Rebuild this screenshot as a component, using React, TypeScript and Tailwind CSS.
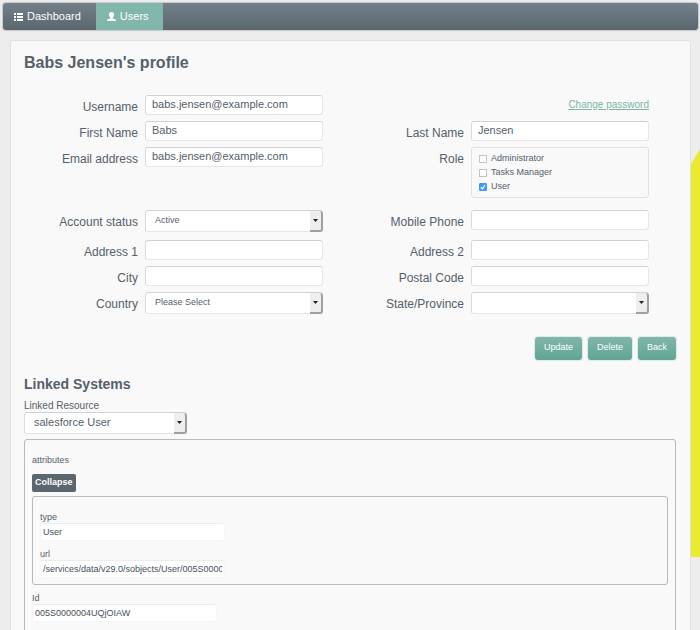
import React, { useId, useState } from 'react';
import { clsx } from 'clsx';

const fieldClass =
  'block w-full rounded-[3px] border border-[#e6e6e6] border-t-[#d2d2d2] border-l-[#dadada] bg-white text-[#55606a] outline-none';

const ListIcon = () => (
  <svg className="h-2 w-[9px]" viewBox="0 0 18 16" fill="currentColor" aria-hidden="true">
    <path d="M0 0h4v4H0zM0 6h4v4H0zM0 12h4v4H0zM6 0h12v4H6zM6 6h12v4H6zM6 12h12v4H6z" />
  </svg>
);

const UserIcon = () => (
  <svg className="h-[9px] w-[9px]" viewBox="0 0 18 18" fill="currentColor" aria-hidden="true">
    <path d="M9 0c3.500 0 5.200 2.400 5 5.400-.2 2.600-1.200 4.400-2.600 5.600v1.200c0 .7.5 1 1.300 1.300l3.400 1.100c1.200.4 1.900 1.200 1.900 3.400H0c0-2.200.7-3 1.900-3.400l3.400-1.100c.8-.3 1.300-.6 1.300-1.300V11C5.200 9.800 4.200 8 4 5.400 3.800 2.400 5.500 0 9 0z" />
  </svg>
);

interface FieldProps {
  label: string;
  children: (id: string) => React.ReactNode;
}

const Field: React.FC<FieldProps> = ({ label, children }) => {
  const id = useId();
  return (
    <div className="grid grid-cols-[114px_1fr] items-start gap-[7px] pr-[27px]">
      <label htmlFor={id} className="pt-1 text-right text-xs">
        {label}
      </label>
      {children(id)}
    </div>
  );
};

const TextField = ({ label, value = '', type = 'text' }: { label: string; value?: string; type?: string }) => (
  <Field label={label}>
    {(id) => <input id={id} type={type} defaultValue={value} className={clsx(fieldClass, 'h-5 px-[6px] pb-[2px] text-[11px]')} />}
  </Field>
);

interface SelectProps {
  id: string;
  options: string[];
  large?: boolean;
}

const Select: React.FC<SelectProps> = ({ id, options, large = false }) => (
  <div className="relative">
    <select
      id={id}
      className={clsx(fieldClass, 'h-[22px] appearance-none pr-4 pl-[9px]', large ? 'pb-[2px] text-[11px]' : 'text-[9px]')}
    >
      {options.map((option) => (
        <option key={option}>{option}</option>
      ))}
    </select>
    <span className="pointer-events-none absolute top-px right-0 bottom-0 flex w-[13px] items-center justify-center rounded-r-[3px] border-r-2 border-b-2 border-[#a0a0a0] bg-[#eeeeee]">
      <svg className="h-[3px] w-[5px]" viewBox="0 0 10 6" fill="#222">
        <path d="M0 0h10L5 6z" />
      </svg>
    </span>
  </div>
);

const SelectField = ({ label, options }: { label: string; options: string[] }) => (
  <Field label={label}>{(id) => <Select id={id} options={options} />}</Field>
);

const RoleField = () => {
  const [roles, setRoles] = useState<Record<string, boolean>>({
    Administrator: false,
    'Tasks Manager': false,
    User: true
  });

  return (
    <div role="group" aria-labelledby="role-label" className="grid grid-cols-[114px_1fr] items-start gap-[7px] pr-[27px]">
      <span id="role-label" className="pt-1 text-right text-xs">
        Role
      </span>
      <div className="rounded-[3px] border border-[#e2e2e2] px-[7px] pt-1 pb-[3px]">
        {Object.entries(roles).map(([role, checked]) => (
          <label key={role} className="flex h-[14px] items-center gap-1 text-[9px]">
            <span className="relative flex">
              <input
                type="checkbox"
                checked={checked}
                onChange={() => setRoles({ ...roles, [role]: !checked })}
                className="h-2 w-2 appearance-none border border-[#c4c4c4] bg-white checked:rounded-[1px] checked:border-[#3b99fc] checked:bg-[#3b99fc]"
              />
              {checked && (
                <svg className="pointer-events-none absolute inset-0 h-2 w-2" viewBox="0 0 16 16" fill="none" stroke="white" strokeWidth="2.500">
                  <path d="M4 8.500l3 3.500 5-8" />
                </svg>
              )}
            </span>
            {role}
          </label>
        ))}
      </div>
    </div>
  );
};

const PlainField = ({ label, value }: { label: string; value: string }) => {
  const id = useId();
  return (
    <div className="w-[185px] text-[9px]">
      <label htmlFor={id} className="block leading-3">
        {label}
      </label>
      <input
        id={id}
        type="text"
        defaultValue={value}
        className="block h-[18px] w-full rounded-[3px] border border-[#f6f6f6] border-t-[#ececec] bg-white px-[2px] text-[#45505a] outline-none"
      />
    </div>
  );
};

export default function App() {
  const [open, setOpen] = useState(true);

  return (
    <div className="relative flex min-h-screen flex-col overflow-hidden bg-[#ededed] pt-[3px] font-['Liberation_Sans',Arial,sans-serif] text-[#55606a]">
      {/* Background accent */}
      <svg className="absolute top-[149px] right-0 h-[408px] w-[10px]" viewBox="0 0 10 408" fill="#eaea30" aria-hidden="true">
        <path d="M10 0v408H0V17z" />
      </svg>

      <nav className="mr-[2px] ml-[3px] flex h-[27px] overflow-hidden rounded-[3px] bg-linear-to-b from-[#73808a] to-[#5b666e] text-[11px] text-white shadow-[0_0_1px_1px_#c8c8c8]">
        <a href="#dashboard" className="flex items-center gap-1 pr-[15px] pl-[11px]">
          <ListIcon />
          Dashboard
        </a>
        <a href="#users" className="flex items-center gap-1 bg-[#80b7aa] pr-[14px] pl-[11px]">
          <UserIcon />
          Users
        </a>
      </nav>

      <main className="relative mt-[10px] mr-[9px] ml-[10px] flex-1 rounded-t-[3px] border border-b-0 border-[#e0e0e0] bg-[#f9f9f9] pt-3 pr-[14px] pl-[13px]">
        <h1 className="text-base leading-5 font-bold">Babs Jensen's profile</h1>

        <form className="mt-[22px]" onSubmit={(e) => e.preventDefault()}>
          <div className="grid grid-cols-2 gap-y-[6px]">
            <TextField label="Username" value="babs.jensen@example.com" />
            <div className="pt-[2px] pr-[27px] text-right text-[10px]">
              <a href="#password" className="text-[#7db5a7] underline">
                Change password
              </a>
            </div>
            <TextField label="First Name" value="Babs" />
            <TextField label="Last Name" value="Jensen" />
            <TextField label="Email address" value="babs.jensen@example.com" type="email" />
            <RoleField />
          </div>

          <div className="mt-3 grid grid-cols-2 gap-y-[6px]">
            <SelectField label="Account status" options={['Active', 'Inactive']} />
            <TextField label="Mobile Phone" type="tel" />
          </div>

          <div className="mt-2 grid grid-cols-2 gap-y-[6px]">
            <TextField label="Address 1" />
            <TextField label="Address 2" />
            <TextField label="City" />
            <TextField label="Postal Code" />
            <SelectField label="Country" options={['Please Select']} />
            <SelectField label="State/Province" options={['']} />
          </div>

          <div className="mt-[23px] flex justify-end gap-[6px]">
            {['Update', 'Delete', 'Back'].map((action) => (
              <button
                key={action}
                type="button"
                className="h-[23px] rounded-[3px] bg-linear-to-b from-[#80b7aa] to-[#60a593] px-[9px] pb-px text-[9px] text-white shadow-[0_0_1px_1px_#dfe8e5]"
              >
                {action}
              </button>
            ))}
          </div>
        </form>

        <section>
          <h2 className="mt-[14px] text-sm leading-5 font-bold">Linked Systems</h2>
          <div className="mt-[6px] w-[163px]">
            <label htmlFor="linked-resource" className="block text-[10px] leading-3">
              Linked Resource
            </label>
            <Select id="linked-resource" options={['salesforce User']} large />
          </div>

          <div className="mt-[5px] rounded-[3px] border border-[#b5bbc0] px-[7px] pt-[14px] pb-6">
            <div className="text-[9px] leading-3">attributes</div>
            <button
              type="button"
              onClick={() => setOpen(!open)}
              className="mt-2 block h-[18px] rounded-[2px] bg-[#5b666e] px-[3px] text-[9px] font-bold text-white"
            >
              {open ? 'Collapse' : 'Expand'}
            </button>
            {open && (
              <div className="mt-1 flex flex-col gap-[7px] rounded-[3px] border border-[#b5bbc0] px-[7px] pt-[14px] pb-[6px]">
                <PlainField label="type" value="User" />
                <PlainField label="url" value="/services/data/v29.0/sobjects/User/005S0000004UQjOIAW" />
              </div>
            )}
            <div className="mt-[7px]">
              <PlainField label="Id" value="005S0000004UQjOIAW" />
            </div>
          </div>
        </section>
      </main>
    </div>
  );
}
